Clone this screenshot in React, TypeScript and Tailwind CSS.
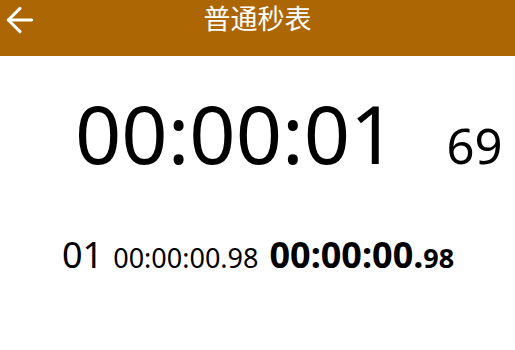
import { ArrowLeft } from "lucide-react";

export default function App() {
  return (
    <div className="w-[515px] h-[350px] bg-white font-['Noto_Sans','Noto_Sans_CJK_SC',sans-serif] text-black">
      <header className="relative flex h-[56px] items-start justify-center bg-[#ad6604] text-white">
        <ArrowLeft className="absolute left-0 top-0 h-[40px] w-[40px]" strokeWidth={1.8} />
        <h1 className="mt-[4px] text-[27px] leading-[30px]">普通秒表</h1>
      </header>

      <div className="mt-[36px] flex items-baseline pl-[75px]">
        <span className="text-[81px] leading-none">00:00:01</span>
        <span className="ml-[50px] text-[49px] leading-none">69</span>
      </div>

      <div className="mt-[64px] flex items-baseline pl-[62px]">
        <span className="text-[36px] leading-none">01</span>
        <span className="ml-[10px] text-[27px] leading-none">00:00:00.98</span>
        <span className="ml-[11px] text-[36px] font-bold leading-none">
          00:00:00.<span className="text-[27px]">98</span>
        </span>
      </div>
    </div>
  );
}
